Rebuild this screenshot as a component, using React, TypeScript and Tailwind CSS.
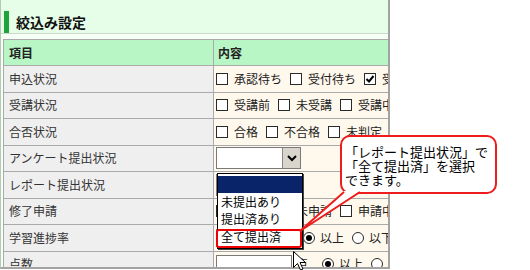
import type { ReactNode } from 'react'

const font = "font-['Noto_Sans_CJK_JP',sans-serif]"

function Check({ label, checked }: { label: string; checked?: boolean }) {
  return (
    <span className="mr-[8px] flex shrink-0 items-center">
      <span className="flex h-[12px] w-[12px] shrink-0 items-center justify-center border border-[#2a2a2a] bg-white">
        {checked ? (
          <svg width="10" height="10" viewBox="0 0 10 10">
            <path d="M1.5 5 L4 7.5 L8.5 2" fill="none" stroke="#000" strokeWidth="2" />
          </svg>
        ) : null}
      </span>
      <span className="ml-[6px]">{label}</span>
    </span>
  )
}

function Radio({ label, checked }: { label: string; checked?: boolean }) {
  return (
    <span className="mr-[8px] flex shrink-0 items-center">
      <span className="flex h-[12px] w-[12px] shrink-0 items-center justify-center rounded-full border border-[#2a2a2a] bg-white">
        {checked ? <span className="h-[6px] w-[6px] rounded-full bg-black" /> : null}
      </span>
      <span className="ml-[5px]">{label}</span>
    </span>
  )
}

function TextBox({ className }: { className: string }) {
  return <span className={`h-[18px] shrink-0 border border-[#7a7a7a] bg-white ${className}`} />
}

function Select() {
  return (
    <span className="flex h-[22px] w-[85px] shrink-0 border border-[#7a7a7a] bg-white">
      <span className="flex-1" />
      <span className="flex w-[18px] items-center justify-center border-l border-[#888] bg-[#d8d5cc]">
        <svg width="12" height="10" viewBox="0 0 12 10">
          <path d="M2 3 L6 7 L10 3" fill="none" stroke="#000" strokeWidth="2" />
        </svg>
      </span>
    </span>
  )
}

const rows: { label: string; content: ReactNode }[] = [
  {
    label: '申込状況',
    content: (
      <>
        <Check label="承認待ち" />
        <Check label="受付待ち" />
        <Check label="受付済" checked />
      </>
    ),
  },
  {
    label: '受講状況',
    content: (
      <>
        <Check label="受講前" />
        <Check label="未受講" />
        <Check label="受講中" />
      </>
    ),
  },
  {
    label: '合否状況',
    content: (
      <>
        <Check label="合格" />
        <Check label="不合格" />
        <Check label="未判定" />
      </>
    ),
  },
  { label: 'アンケート提出状況', content: <Select /> },
  { label: 'レポート提出状況', content: <Select /> },
  {
    label: '修了申請',
    content: (
      <>
        <Check label="対象外" />
        <Check label="未申請" />
        <Check label="申請中" />
      </>
    ),
  },
  {
    label: '学習進捗率',
    content: (
      <>
        <TextBox className="w-[73px]" />
        <span className="ml-[3px] mr-[2px] w-[9px] shrink-0">%</span>
        <Radio label="以上" checked />
        <Radio label="以下" />
      </>
    ),
  },
  {
    label: '点数',
    content: (
      <>
        <TextBox className="w-[76px]" />
        <span className="ml-[4px] mr-[14px] shrink-0">点</span>
        <Radio label="以上" checked />
        <Radio label="以下" />
      </>
    ),
  },
]

export default function App() {
  return (
    <div className={`relative h-[270px] w-[530px] overflow-hidden bg-white text-[12px] leading-none text-[#222] ${font}`}>
      <div className="h-[269px] w-[390px] overflow-hidden border-b-2 border-l border-r-2 border-[#a3a3a3] border-l-[#b4c8b4] bg-[#f6fff6]">
        <div className="flex h-[34px] items-end border-b border-[#cfd8cf] bg-[#e6fee8]">
          <span className="ml-[3px] h-[22px] w-[5px] bg-[#1fa33b]" />
          <span className="ml-[7px] flex h-[22px] items-center text-[14px] font-bold text-[#111]">絞込み設定</span>
        </div>
        <div className="ml-[2px] mt-[5px] border-l border-t border-[#aaa]">
          <div className="flex h-[26px] border-b border-[#aaa] bg-[#b9f6c6] font-bold">
            <span className="flex w-[210px] shrink-0 items-center border-r border-[#aaa] pl-[5px]">項目</span>
            <span className="flex items-center pl-[4px]">内容</span>
          </div>
          {rows.map((row) => (
            <div key={row.label} className="flex h-[26.5px] border-b border-[#aaa]">
              <span className="flex w-[210px] shrink-0 items-center border-r border-[#aaa] bg-[#efefef] pl-[5px] text-[#333]">
                {row.label}
              </span>
              <span className="flex flex-1 items-center whitespace-nowrap bg-[#fff8ec] pl-[2px]">{row.content}</span>
            </div>
          ))}
        </div>
      </div>

      {/* open dropdown list */}
      <div className="absolute left-[217px] top-[173px] w-[86px] border border-black bg-white pt-[2px] pb-[2px] text-[12px] text-black shadow-[1px_1px_0_#444]">
        <div className="h-[17px] bg-[#0a246a]" />
        <div className="flex h-[17.5px] items-center pl-[3px]">未提出あり</div>
        <div className="flex h-[17.5px] items-center pl-[3px]">提出済あり</div>
        <div className="flex h-[17.5px] items-center pl-[3px]">全て提出済</div>
      </div>
      <div className="absolute left-[216px] top-[229px] h-[19px] w-[86px] rounded-[3px] border-2 border-[#f00000]" />

      {/* callout */}
      <div className="absolute left-[340px] top-[135px] h-[59px] w-[157px] rounded-[10px] border-2 border-[#ee1c1c] bg-white pl-[3px] pt-[8px] text-[13px] leading-[14px] text-black">
        <div>「レポート提出状況」で</div>
        <div>「全て提出済」を選択</div>
        <div>できます。</div>
      </div>
      <svg className="pointer-events-none absolute left-0 top-0" width="530" height="270">
        <polygon points="344,191 300,231 360,191" fill="#fff" />
        <path d="M344 192 L300 231 L360 192" fill="none" stroke="#ee1c1c" strokeWidth="2" strokeLinejoin="miter" />
        <path
          d="M293.5 251.5 L293.5 267.5 L297.5 263.5 L300.5 270 L303 269 L300 262.5 L305.5 262.5 Z"
          fill="#fff"
          stroke="#000"
          strokeWidth="1"
        />
      </svg>
    </div>
  )
}
